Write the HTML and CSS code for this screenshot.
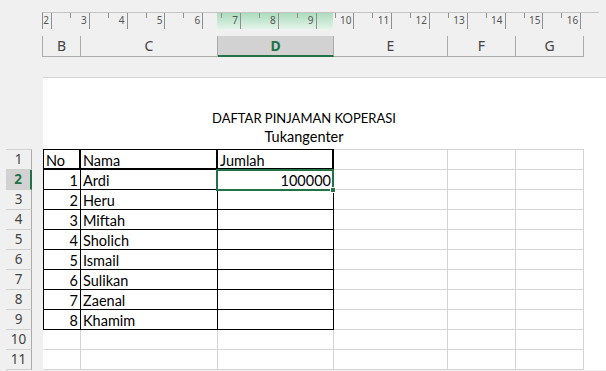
FILE: index.html
```html
<!DOCTYPE html>
<html lang="en">
<head>
    <meta charset="UTF-8">
    <title>DAFTAR PINJAMAN KOPERASI</title>
    <link rel="stylesheet" href="styles.css">
</head>
<body>
    <div class="ruler">
        <span class="cm first"><i>2</i></span>
        <span class="cm"><i>3</i></span>
        <span class="cm"><i>4</i></span>
        <span class="cm"><i>5</i></span>
        <span class="cm"><i>6</i></span>
        <span class="cm"><i>7</i></span>
        <span class="cm"><i>8</i></span>
        <span class="cm"><i>9</i></span>
        <span class="cm"><i>10</i></span>
        <span class="cm"><i>11</i></span>
        <span class="cm"><i>12</i></span>
        <span class="cm"><i>13</i></span>
        <span class="cm"><i>14</i></span>
        <span class="cm"><i>15</i></span>
        <span class="cm"><i>16</i></span>
        <span class="cm tail"></span>
    </div>

    <div class="colhead">
        <div class="ch col-b">B</div>
        <div class="ch col-c">C</div>
        <div class="ch col-d active">D</div>
        <div class="ch col-e">E</div>
        <div class="ch col-f">F</div>
        <div class="ch col-g">G</div>
    </div>

    <div class="sheet">
        <div class="rowheads">
            <div class="rh">1</div>
            <div class="rh active">2</div>
            <div class="rh">3</div>
            <div class="rh">4</div>
            <div class="rh">5</div>
            <div class="rh">6</div>
            <div class="rh">7</div>
            <div class="rh">8</div>
            <div class="rh">9</div>
            <div class="rh">10</div>
            <div class="rh">11</div>
        </div>

        <div class="page">
            <div class="title caps">DAFTAR PINJAMAN KOPERASI</div>
            <div class="title">Tukangenter</div>

            <div class="grid">
                <div class="row head">
                    <div class="cell col-b tb">No</div>
                    <div class="cell col-c tb">Nama</div>
                    <div class="cell col-d tb">Jumlah</div>
                    <div class="cell col-e"></div>
                    <div class="cell col-f"></div>
                    <div class="cell col-g"></div>
                </div>
                <div class="row">
                    <div class="cell col-b tb num">1</div>
                    <div class="cell col-c tb">Ardi</div>
                    <div class="cell col-d tb num sel">100000</div>
                    <div class="cell col-e"></div>
                    <div class="cell col-f"></div>
                    <div class="cell col-g"></div>
                </div>
                <div class="row">
                    <div class="cell col-b tb num">2</div>
                    <div class="cell col-c tb">Heru</div>
                    <div class="cell col-d tb"></div>
                    <div class="cell col-e"></div>
                    <div class="cell col-f"></div>
                    <div class="cell col-g"></div>
                </div>
                <div class="row">
                    <div class="cell col-b tb num">3</div>
                    <div class="cell col-c tb">Miftah</div>
                    <div class="cell col-d tb"></div>
                    <div class="cell col-e"></div>
                    <div class="cell col-f"></div>
                    <div class="cell col-g"></div>
                </div>
                <div class="row">
                    <div class="cell col-b tb num">4</div>
                    <div class="cell col-c tb">Sholich</div>
                    <div class="cell col-d tb"></div>
                    <div class="cell col-e"></div>
                    <div class="cell col-f"></div>
                    <div class="cell col-g"></div>
                </div>
                <div class="row">
                    <div class="cell col-b tb num">5</div>
                    <div class="cell col-c tb">Ismail</div>
                    <div class="cell col-d tb"></div>
                    <div class="cell col-e"></div>
                    <div class="cell col-f"></div>
                    <div class="cell col-g"></div>
                </div>
                <div class="row">
                    <div class="cell col-b tb num">6</div>
                    <div class="cell col-c tb">Sulikan</div>
                    <div class="cell col-d tb"></div>
                    <div class="cell col-e"></div>
                    <div class="cell col-f"></div>
                    <div class="cell col-g"></div>
                </div>
                <div class="row">
                    <div class="cell col-b tb num">7</div>
                    <div class="cell col-c tb">Zaenal</div>
                    <div class="cell col-d tb"></div>
                    <div class="cell col-e"></div>
                    <div class="cell col-f"></div>
                    <div class="cell col-g"></div>
                </div>
                <div class="row">
                    <div class="cell col-b tb num">8</div>
                    <div class="cell col-c tb">Khamim</div>
                    <div class="cell col-d tb"></div>
                    <div class="cell col-e"></div>
                    <div class="cell col-f"></div>
                    <div class="cell col-g"></div>
                </div>
                <div class="row">
                    <div class="cell col-b"></div>
                    <div class="cell col-c"></div>
                    <div class="cell col-d"></div>
                    <div class="cell col-e"></div>
                    <div class="cell col-f"></div>
                    <div class="cell col-g"></div>
                </div>
                <div class="row">
                    <div class="cell col-b"></div>
                    <div class="cell col-c"></div>
                    <div class="cell col-d"></div>
                    <div class="cell col-e"></div>
                    <div class="cell col-f"></div>
                    <div class="cell col-g"></div>
                </div>
            </div>
        </div>
    </div>
</body>
</html>
```

FILE: styles.css
```css
body {
    margin: 0;
    height: 371px;
    overflow: hidden;
    background: #f0f0f0;
    font-family: 'Lato', 'Liberation Sans', sans-serif;
    color: #000;
}

/* ruler */
.ruler {
    display: flex;
    width: 556px;
    height: 16px;
    margin: 12px 0 0 42px;
    border-top: 1px solid #c4c4c4;
    border-left: 1px solid #8f8f8f;
    background: linear-gradient(#acdcbd, #e3f3e9) 174px 0 / 116px 100% no-repeat;
}

.cm {
    flex: none;
    box-sizing: border-box;
    width: 37.8px;
    display: flex;
    justify-content: flex-end;
    border-right: 1px solid #8f8f8f;
    background: linear-gradient(#8f8f8f, #8f8f8f) 18px 0 / 1px 5px no-repeat;
}

.cm.first {
    width: 9px;
    background: none;
}

.cm.tail {
    width: 12px;
    border-right: none;
}

.cm i {
    font-style: normal;
    font-family: 'Noto Sans', sans-serif;
    font-size: 10px;
    line-height: 12px;
    color: #555;
    padding: 1px 2px 0 0;
}

/* column headers */
.colhead {
    display: flex;
    margin: 7px 0 0 42px;
    border-left: 1px solid #ababab;
}

.ch {
    box-sizing: border-box;
    height: 21px;
    border-right: 1px solid #ababab;
    border-bottom: 1px solid #ababab;
    text-align: center;
    font-family: 'Noto Sans', sans-serif;
    font-size: 14px;
    line-height: 20px;
    color: #444;
}

.ch.active {
    background: #d2d2d2;
    color: #217346;
    font-weight: bold;
    border-bottom: 2px solid #217346;
}

.col-b { width: 38px; }
.col-c { width: 137px; }
.col-d { width: 116px; }
.col-e { width: 114px; }
.col-f { width: 68px; }
.col-g { width: 68px; }

/* sheet */
.sheet {
    display: flex;
    margin-top: 20px;
}

.rowheads {
    flex: none;
    width: 26px;
    margin-left: 6px;
    padding-top: 72px;
}

.rh {
    box-sizing: border-box;
    height: 20px;
    border-right: 1px solid #ababab;
    border-bottom: 1px solid #d0d0d0;
    text-align: center;
    font-family: 'Noto Sans', sans-serif;
    font-size: 13.5px;
    line-height: 19px;
    color: #444;
}

.rh:first-child {
    height: 21px;
    border-top: 1px solid #d0d0d0;
}

.rh.active {
    background: #d2d2d2;
    color: #217346;
    font-weight: bold;
    border-right: 2px solid #217346;
}

.page {
    flex: 1;
    margin-left: 11px;
    padding-top: 29px;
    background: #fff;
    border-top: 1px solid #d4d4d4;
}

.title {
    width: 522px;
    text-align: center;
    font-size: 14.5px;
    line-height: 20px;
}

.title.caps {
    font-size: 13px;
    padding-top: 1px;
    height: 19px;
}

.grid {
    margin-top: 2px;
}

.row {
    display: flex;
}

.cell {
    box-sizing: border-box;
    height: 20px;
    padding: 2px 2px 0;
    border-right: 1px solid #d4d4d4;
    border-bottom: 1px solid #d4d4d4;
    font-size: 14.5px;
    line-height: 18px;
    white-space: nowrap;
}

.cell.col-b {
    border-left: 1px solid transparent;
}

.cell.tb {
    border-right-color: #000;
    border-bottom-color: #000;
}

.cell.col-b.tb {
    border-left-color: #000;
}

.head .cell {
    height: 21px;
    border-top: 1px solid #d4d4d4;
    line-height: 17px;
}

.head .cell.tb {
    border-top-color: #000;
    border-right-width: 2px;
    border-bottom-width: 2px;
}

.num {
    text-align: right;
}

.sel {
    position: relative;
}

.sel::before {
    content: '';
    position: absolute;
    top: -1px;
    left: -2px;
    right: -1px;
    bottom: -2px;
    border: 2px solid #217346;
}

.sel::after {
    content: '';
    position: absolute;
    right: -3px;
    bottom: -4px;
    width: 4px;
    height: 4px;
    background: #217346;
    border: 1px solid #fff;
}
```
